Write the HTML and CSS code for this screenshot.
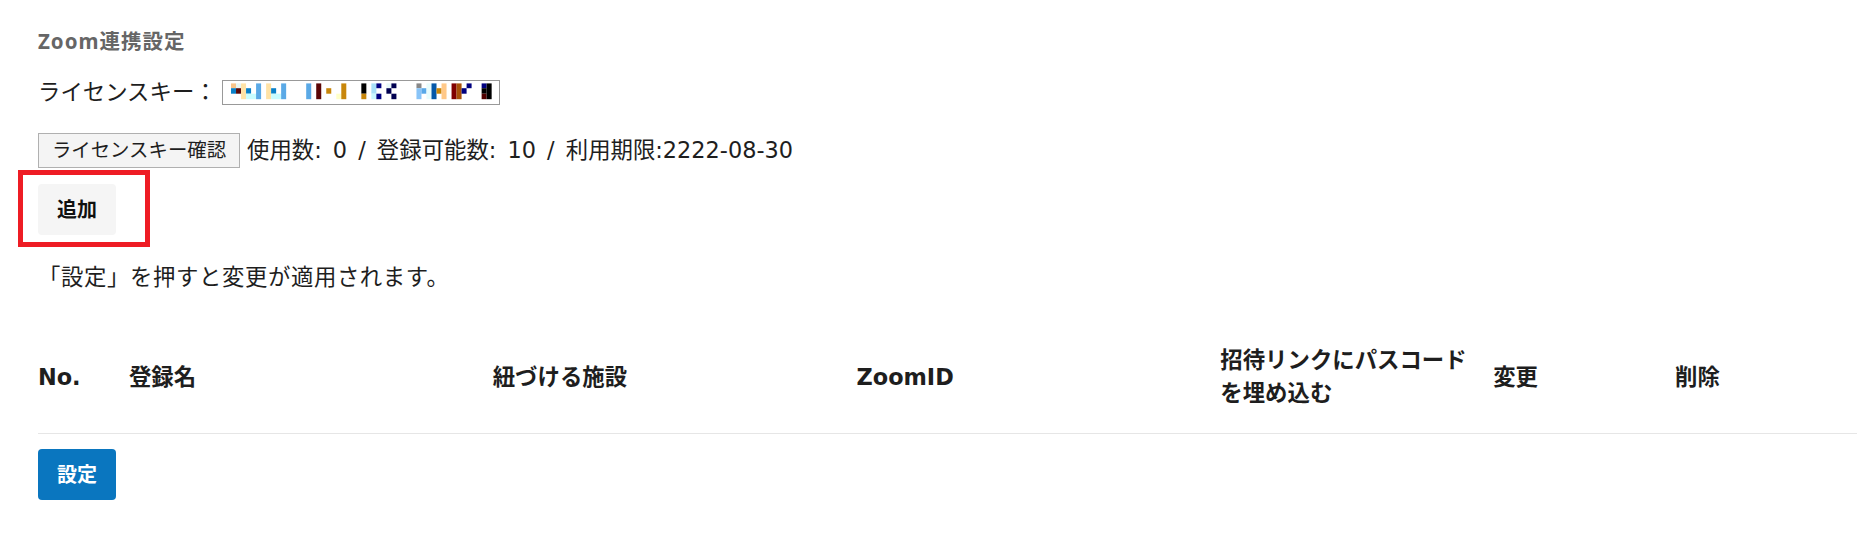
FILE: index.html
```html
<!DOCTYPE html>
<html lang="ja">
<head>
<meta charset="utf-8">
<title>Zoom連携設定</title>
<link rel="stylesheet" href="styles.css">
</head>
<body>
<div class="page">
  <h2 class="title">Zoom連携設定</h2>

  <div class="row license">
    <span class="label">ライセンスキー：</span>
    <div class="key-box">
      <svg class="key-mosaic" viewBox="11 17 826 67" preserveAspectRatio="none" aria-hidden="true">
        <rect x="35" y="24" width="15" height="14" fill="#f8c48a"/>
        <rect x="35" y="38" width="15" height="16" fill="#0a80c8"/>
        <rect x="50" y="24" width="15" height="14" fill="#e6f6f4"/>
        <rect x="50" y="38" width="15" height="16" fill="#5a0a0a"/>
        <rect x="65" y="24" width="15" height="46" fill="#ffe2a6"/>
        <rect x="80" y="38" width="15" height="16" fill="#0a80c8"/>
        <rect x="80" y="54" width="30" height="16" fill="#c8fcff"/>
        <rect x="110" y="24" width="15" height="46" fill="#5aa9e6"/>
        <rect x="140" y="24" width="15" height="46" fill="#ffe2a6"/>
        <rect x="155" y="38" width="15" height="16" fill="#0a80c8"/>
        <rect x="155" y="54" width="30" height="16" fill="#c8fcff"/>
        <rect x="185" y="24" width="15" height="46" fill="#5aa9e6"/>
        <rect x="260" y="24" width="15" height="46" fill="#5aa9e6"/>
        <rect x="290" y="24" width="15" height="46" fill="#5a0505"/>
        <rect x="320" y="38" width="15" height="16" fill="#c8860a"/>
        <rect x="350" y="54" width="15" height="16" fill="#ffffc8"/>
        <rect x="365" y="24" width="15" height="46" fill="#c8860a"/>
        <rect x="425" y="24" width="15" height="30" fill="#000000"/>
        <rect x="425" y="54" width="15" height="16" fill="#c8860a"/>
        <rect x="455" y="24" width="15" height="30" fill="#a8e0f8"/>
        <rect x="455" y="54" width="15" height="16" fill="#c8f8ff"/>
        <rect x="470" y="24" width="15" height="14" fill="#000080"/>
        <rect x="470" y="54" width="15" height="16" fill="#000080"/>
        <rect x="500" y="24" width="15" height="14" fill="#e8f8f8"/>
        <rect x="500" y="38" width="15" height="16" fill="#000050"/>
        <rect x="515" y="24" width="15" height="14" fill="#000050"/>
        <rect x="515" y="54" width="15" height="16" fill="#000050"/>
        <rect x="590" y="24" width="15" height="14" fill="#888888"/>
        <rect x="590" y="38" width="15" height="32" fill="#88c4f8"/>
        <rect x="605" y="38" width="15" height="16" fill="#58a8e8"/>
        <rect x="620" y="24" width="15" height="46" fill="#e8fcfc"/>
        <rect x="635" y="24" width="15" height="46" fill="#0558a8"/>
        <rect x="650" y="38" width="15" height="16" fill="#c8860a"/>
        <rect x="665" y="24" width="15" height="46" fill="#ffc888"/>
        <rect x="695" y="24" width="15" height="46" fill="#800000"/>
        <rect x="710" y="24" width="15" height="46" fill="#a85008"/>
        <rect x="725" y="38" width="15" height="16" fill="#000080"/>
        <rect x="740" y="24" width="15" height="14" fill="#000080"/>
        <rect x="785" y="24" width="15" height="14" fill="#000080"/>
        <rect x="785" y="38" width="15" height="16" fill="#000000"/>
        <rect x="785" y="54" width="15" height="16" fill="#500000"/>
        <rect x="800" y="24" width="15" height="46" fill="#000000"/>
      </svg>
    </div>
  </div>

  <div class="row check">
    <button class="btn-check" type="button">ライセンスキー確認</button>
    <span class="usage">使用数: 0 / 登録可能数: 10 / 利用期限:2222-08-30</span>
  </div>

  <div class="add-wrap">
    <button class="btn-add" type="button">追加</button>
    <div class="highlight"></div>
  </div>

  <p class="notice">「設定」を押すと変更が適用されます。</p>

  <table class="zoom-table">
    <colgroup>
      <col class="c-no">
      <col class="c-wide">
      <col class="c-wide">
      <col class="c-wide">
      <col class="c-mid">
      <col class="c-narrow">
      <col class="c-narrow">
    </colgroup>
    <thead>
      <tr>
        <th>No.</th>
        <th>登録名</th>
        <th>紐づける施設</th>
        <th>ZoomID</th>
        <th>招待リンクにパスコードを埋め込む</th>
        <th>変更</th>
        <th>削除</th>
      </tr>
    </thead>
    <tbody></tbody>
  </table>

  <button class="btn-save" type="button">設定</button>
</div>
</body>
</html>
```

FILE: styles.css
```css
* {
  box-sizing: border-box;
}

html, body {
  margin: 0;
  padding: 0;
  background: #ffffff;
}

body {
  font-family: "DejaVu Sans", "Noto Sans CJK JP", sans-serif;
  color: #1e1e1e;
  font-size: 22.4px;
  line-height: 33px;
}

.page {
  padding: 26px 10px 30px 38px;
}

.title {
  margin: 0;
  font-family: "Noto Sans", "Noto Sans CJK JP", sans-serif;
  font-size: 20.5px;
  letter-spacing: 1px;
  line-height: 30px;
  font-weight: 700;
  color: #666666;
}

.row {
  display: flex;
  align-items: center;
}

.license {
  margin-top: 20px;
  height: 33px;
}

.key-box {
  margin-left: 5px;
  width: 278px;
  height: 25px;
  border: 1px solid #999999;
  background: #ffffff;
}

.key-mosaic {
  display: block;
  width: 100%;
  height: 100%;
}

.check {
  margin-top: 24px;
  height: 35px;
}

.btn-check {
  font-family: inherit;
  font-size: 19.4px;
  line-height: 33px;
  height: 35px;
  width: 202px;
  padding: 0;
  color: #1e1e1e;
  background: #f4f4f4;
  border: 1px solid #b0b0b0;
  border-radius: 0;
}

.usage {
  margin-left: 7px;
  word-spacing: 4px;
}

.add-wrap {
  position: relative;
  margin-top: 16px;
  height: 51px;
}

.btn-add,
.btn-save {
  font-family: inherit;
  font-size: 20px;
  font-weight: 700;
  line-height: 30px;
  height: 51px;
  width: 78px;
  padding: 0;
  border: none;
  border-radius: 4px;
}

.btn-add {
  background: #f5f5f5;
  color: #111111;
}

.highlight {
  position: absolute;
  left: -20px;
  top: -14px;
  width: 132px;
  height: 77px;
  border: 5px solid #ee1c24;
  pointer-events: none;
}

.notice {
  margin: 26px 0 0;
  letter-spacing: 0.6px;
}

.zoom-table {
  margin-top: 27px;
  width: 100%;
  border-collapse: collapse;
  table-layout: fixed;
}

.c-no { width: 5%; }
.c-wide { width: 20%; }
.c-mid { width: 15%; }
.c-narrow { width: 10%; }

.zoom-table th {
  text-align: left;
  vertical-align: middle;
  font-weight: 700;
  font-size: 22.4px;
  line-height: 33px;
  color: #1e1e1e;
  padding: 23px 10px 23px 0;
  border-bottom: 1px solid #e6e6e6;
}

.btn-save {
  display: block;
  margin-top: 15px;
  background: #0a76bf;
  color: #ffffff;
}
```
